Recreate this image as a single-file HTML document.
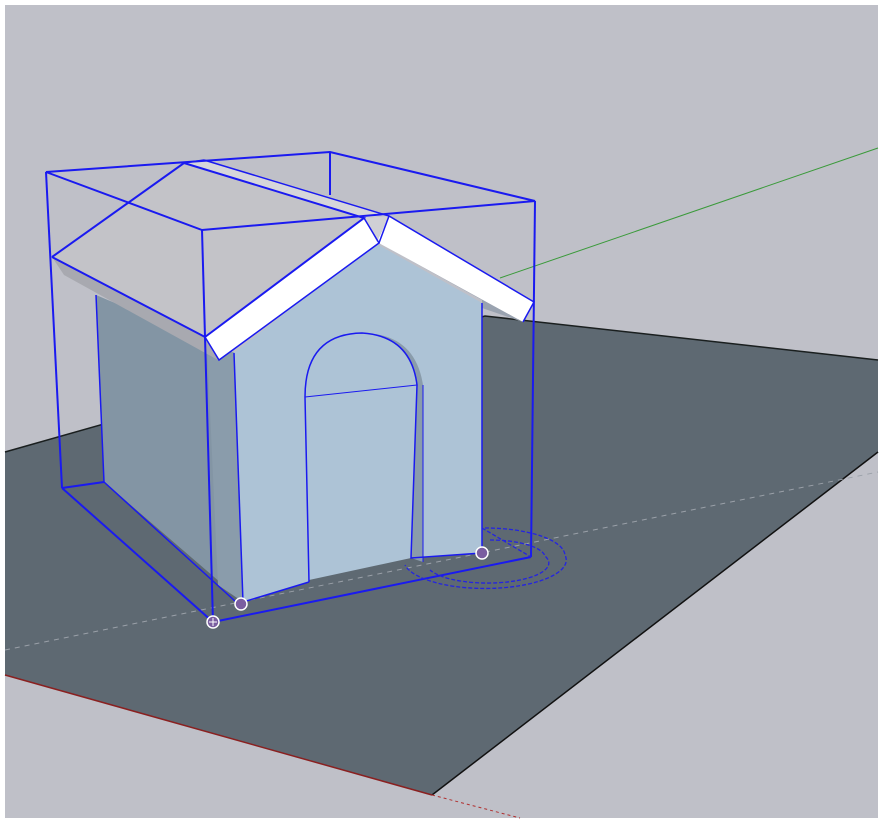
<!DOCTYPE html>
<html><head><meta charset="utf-8"><style>html,body{margin:0;padding:0;background:#fff}svg{display:block}</style></head>
<body>
<svg width="880" height="823" viewBox="0 0 880 823" xmlns="http://www.w3.org/2000/svg">
<rect x="0" y="0" width="880" height="823" fill="#fff"/>
<rect x="5" y="5" width="873" height="813" fill="#bfc0c8"/>
<polygon points="5,452 485,316 878,360 878,452 432,795 5,675" fill="#5e6972"/>
<polyline points="5,452 485,316 878,360" fill="none" stroke="#1a1f1f" stroke-width="1.5"/>
<line x1="878" y1="452" x2="432" y2="795" stroke="#111" stroke-width="1.5"/>
<line x1="5" y1="675" x2="432" y2="795" stroke="#8a2020" stroke-width="1.5"/>
<line x1="432" y1="795" x2="520" y2="818" stroke="#b03030" stroke-width="1" stroke-dasharray="3,3"/>
<line x1="500" y1="278" x2="878" y2="148" stroke="#3a9a3a" stroke-width="1"/>
<line x1="5" y1="650" x2="878" y2="472" stroke="#9aa0a8" stroke-width="1" stroke-dasharray="5,5"/>
<!-- left side wall -->
<polygon points="96,295 234,353 243,602 104,482" fill="#8395a4"/>
<polygon points="207,345 236,353 243,602 218,585" fill="#8a9cab"/>
<!-- front wall -->
<path d="M375,243 L234,353 L243,602 L309,582 L305,397 Q305,334 362,333 Q411,336 417,385 L411,558 L482,553 L482,303 Z" fill="#adc3d6"/>
<path d="M305,397 Q305,334 362,333 Q411,336 417,385 L411,558 L309,580 Z" fill="#adc3d6"/>
<path d="M375,334 Q416,340 423,385 L423,562 L411,558 L417,385 Q410,344 375,334 Z" fill="#8a9cab"/>
<!-- roof -->
<polygon points="52,257 184,163 364,218 205,337" fill="#c3c3c8"/>
<polygon points="52,257 64,275 218,360 205,337" fill="#a8a9b0"/>
<polygon points="184,163 204,160 387,215 364,218" fill="#d6d6da"/>
<polygon points="205,337 364,218 379,243 219,360" fill="#ffffff"/>
<polygon points="389,216 534,302 523,322 377,242" fill="#ffffff"/>
<polygon points="364,218 389,216 377,242" fill="#d0d0d5"/>
<polygon points="379,243 523,322 482,308 482,300" fill="#9aa3b0"/>
<g fill="none" stroke="#1a1af0" stroke-width="2">
<polygon points="46,172 330,152 535,201 202,230"/>
<line x1="46" y1="172" x2="62" y2="488"/>
<line x1="202" y1="230" x2="213" y2="622"/>
<line x1="535" y1="201" x2="531" y2="557"/>
<line x1="330" y1="152" x2="330" y2="195"/>
<polyline points="62,488 213,622 531,557"/>
<line x1="62" y1="488" x2="104" y2="482"/>
<polyline points="52,257 184,163 364,218 205,337 52,257"/>
<line x1="184" y1="163" x2="204" y2="160" stroke-width="1.5"/>
<polyline points="204,160 389,216 534,302 523,322" stroke-width="1.5"/>
<polyline points="205,337 219,360 379,243 364,218" stroke-width="1.5"/>
<line x1="379" y1="243" x2="389" y2="216" stroke-width="1.5"/>
<line x1="96" y1="295" x2="104" y2="482" stroke-width="1.5"/>
<line x1="104" y1="482" x2="236" y2="602" stroke-width="1.5"/>
<line x1="234" y1="353" x2="243" y2="602" stroke-width="1.5"/>
<line x1="482" y1="303" x2="482" y2="553" stroke-width="1.5"/>
<line x1="243" y1="602" x2="309" y2="582" stroke-width="1.5"/>
<path d="M309,582 L305,397 Q305,334 362,333 Q411,336 417,385 L411,558 L482,553" stroke-width="1.5"/>
<line x1="305" y1="397" x2="417" y2="385" stroke-width="1"/>
<line x1="423" y1="385" x2="423" y2="562" stroke-width="1"/>
</g>
<g fill="none" stroke="#2424e0" stroke-width="1.3" stroke-dasharray="4,2">
<path d="M485,528 A80,28 0 0 1 565,555 A80,28 0 0 1 405,565"/>
<path d="M490,540 A55,18 0 0 1 545,556 A55,18 0 0 1 430,570"/>
<line x1="482" y1="528" x2="531" y2="557"/>
</g>
<g fill="#7a5ea0" stroke="#fff" stroke-width="1.5">
<circle cx="241" cy="604" r="6"/>
<circle cx="213" cy="622" r="6"/>
<circle cx="482" cy="553" r="6"/>
</g>
<path d="M209,622 h8 M213,618 v8" stroke="#fff" stroke-width="1"/>
</svg>
</body></html>
